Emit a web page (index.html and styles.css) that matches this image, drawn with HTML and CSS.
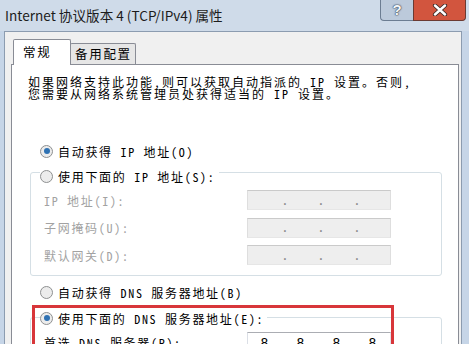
FILE: index.html
```html
<!DOCTYPE html>
<html lang="zh-CN">
<head>
    <meta charset="UTF-8">
    <meta name="viewport" content="width=device-width, initial-scale=1.0">
    <title>Internet 协议版本 4 (TCP/IPv4) 属性</title>
    <link rel="stylesheet" href="styles.css">
</head>
<body>
    <div class="window">
        <div class="titlebar">
            <span class="title">Internet 协议版本 4 (TCP/IPv4) 属性</span>
            <div class="caption-btns">
                <div class="btn-help">?</div>
                <div class="btn-close">
                    <svg width="16" height="12" viewBox="0 0 16 12">
                        <path d="M3 1.5 L13 10.5 M13 1.5 L3 10.5" stroke="#3b2a28" stroke-width="4.2" stroke-linecap="round"/>
                        <path d="M3 1.5 L13 10.5 M13 1.5 L3 10.5" stroke="#fff" stroke-width="2.4" stroke-linecap="round"/>
                    </svg>
                </div>
            </div>
        </div>
        <div class="client">
            <div class="tabs">
                <div class="tab active">常规</div>
                <div class="tab">备用配置</div>
            </div>
            <div class="panel">
                <p class="intro">如果网络支持此功能，则可以获取自动指派的 IP 设置。否则，<br>您需要从网络系统管理员处获得适当的 IP 设置。</p>

                <div class="radio-row">
                    <span class="radio checked"></span>
                    <span>自动获得 IP 地址(O)</span>
                </div>

                <div class="group">
                    <div class="radio-row group-title">
                        <span class="radio"></span>
                        <span>使用下面的 IP 地址(S):</span>
                    </div>
                    <div class="field disabled">
                        <span class="field-label">IP 地址(I):</span>
                        <div class="ip-box">
                            <span class="oct"></span><span class="dot">.</span><span class="oct"></span><span class="dot">.</span><span class="oct"></span><span class="dot">.</span><span class="oct"></span>
                        </div>
                    </div>
                    <div class="field disabled">
                        <span class="field-label">子网掩码(U):</span>
                        <div class="ip-box">
                            <span class="oct"></span><span class="dot">.</span><span class="oct"></span><span class="dot">.</span><span class="oct"></span><span class="dot">.</span><span class="oct"></span>
                        </div>
                    </div>
                    <div class="field disabled">
                        <span class="field-label">默认网关(D):</span>
                        <div class="ip-box">
                            <span class="oct"></span><span class="dot">.</span><span class="oct"></span><span class="dot">.</span><span class="oct"></span><span class="dot">.</span><span class="oct"></span>
                        </div>
                    </div>
                </div>

                <div class="radio-row dns-auto">
                    <span class="radio"></span>
                    <span>自动获得 DNS 服务器地址(B)</span>
                </div>

                <div class="group dns-group">
                    <div class="highlight"></div>
                    <div class="radio-row group-title">
                        <span class="radio checked"></span>
                        <span>使用下面的 DNS 服务器地址(E):</span>
                    </div>
                    <div class="field">
                        <span class="field-label">首选 DNS 服务器(P):</span>
                        <div class="ip-box">
                            <span class="oct">8</span><span class="dot">.</span><span class="oct">8</span><span class="dot">.</span><span class="oct">8</span><span class="dot">.</span><span class="oct">8</span>
                        </div>
                    </div>
                </div>
            </div>
        </div>
    </div>
</body>
</html>
```

FILE: styles.css
```css
html,
body {
    margin: 0;
    padding: 0;
    background-color: #c9d8e9;
}
body {
    font-family: "Noto Sans CJK SC", "Liberation Sans", sans-serif;
    font-size: 12px;
    letter-spacing: 1.7px;
    color: #000;
}
.window {
    width: 469px;
    height: 344px;
    box-sizing: border-box;
    overflow: hidden;
    padding: 0 7px 0 4px;
    background-color: #c6d5e7;
}
.titlebar {
    height: 31px;
    margin: 0 -7px 0 -4px;
    padding: 0 3px 0 5px;
    display: flex;
    justify-content: space-between;
    align-items: flex-start;
    background-color: #cfdbe9;
}
.title {
    margin-top: 6px;
    font-size: 13.6px;
    line-height: 18px;
    letter-spacing: 0;
    color: #1c1c1c;
}
.caption-btns {
    display: flex;
}
.btn-help {
    width: 33px;
    height: 21px;
    box-sizing: border-box;
    border: 1px solid #6c7d92;
    border-top: none;
    border-right: none;
    border-radius: 0 0 0 4px;
    background-color: #bccadb;
    color: #f2f6fa;
    font-family: "Liberation Sans", sans-serif;
    font-weight: bold;
    font-size: 15px;
    letter-spacing: 0;
    line-height: 20px;
    text-align: center;
    text-shadow: 0 0 1px #3e4a5a, 0 0 1px #3e4a5a, 0 0 2px #3e4a5a;
}
.btn-close {
    width: 53px;
    height: 21px;
    box-sizing: border-box;
    border: 1px solid #6b3a32;
    border-top: none;
    border-radius: 0 0 4px 0;
    background-color: #d2553e;
    display: flex;
    align-items: center;
    justify-content: center;
}
.client {
    height: 313px;
    box-sizing: border-box;
    border: 1px solid #8c9cb0;
    border-bottom: none;
    background-color: #f0f0f0;
    padding: 7px 2px 0 6px;
}
.tabs {
    display: flex;
    align-items: flex-end;
    margin-bottom: -1px;
    padding-left: 2px;
}
.tab {
    box-sizing: border-box;
    height: 21px;
    border: 1px solid #898c95;
    border-bottom: none;
    border-radius: 2px 2px 0 0;
    background-color: #e6e6e6;
    font-size: 12.5px;
    line-height: 19px;
    padding: 0 4px;
    width: 66px;
    margin-bottom: 1px;
    white-space: nowrap;
}
.tab.active {
    position: relative;
    z-index: 1;
    height: 26px;
    width: 58px;
    margin-bottom: 0;
    margin-right: -1px;
    background-color: #fff;
    padding: 0 9px;
    line-height: 24px;
}
.panel {
    box-sizing: border-box;
    height: 300px;
    border: 1px solid #898c95;
    border-bottom: none;
    background-color: #fff;
    padding: 11px 0 0 16px;
}
.intro {
    margin: 0;
    line-height: 12px;
    letter-spacing: 2px;
    font-feature-settings: "hwid";
    white-space: nowrap;
}
.radio-row {
    display: flex;
    align-items: center;
    height: 16px;
    gap: 5px;
    font-feature-settings: "hwid";
}
.panel > .radio-row {
    margin: 43px 0 0 12px;
}
.panel > .radio-row.dns-auto {
    margin-top: 8px;
}
.radio {
    width: 13px;
    height: 13px;
    box-sizing: border-box;
    border-radius: 50%;
    border: 1px solid #8e9091;
    background-color: #ececec;
    display: flex;
    align-items: center;
    justify-content: center;
}
.radio.checked::after {
    content: "";
    width: 6px;
    height: 6px;
    border-radius: 50%;
    background-color: #2f72b3;
}
.group {
    width: 412px;
    box-sizing: border-box;
    margin: 13px 0 0 2px;
    border: 1px solid #d5dfe5;
    border-radius: 3px;
    padding: 0 0 10px 9px;
}
.group-title {
    margin-top: -5px;
    width: max-content;
    padding-right: 3px;
    background-color: #fff;
}
.field {
    display: flex;
    align-items: center;
    height: 20px;
    margin-top: 7.5px;
    font-feature-settings: "hwid";
}
.group-title + .field {
    margin-top: 6px;
}
.field-label {
    width: 203px;
    padding-left: 4px;
    white-space: nowrap;
}
.field.disabled .field-label {
    color: #a2a2a2;
}
.ip-box {
    box-sizing: border-box;
    width: 144px;
    height: 20px;
    border: 1px solid #abadb3;
    border-color: #abadb3 #e2e3ea #e3e9ef #dbdfe6;
    background-color: #fff;
    display: flex;
    align-items: center;
    font-family: "DejaVu Sans Mono", monospace;
    font-size: 13px;
    letter-spacing: 0;
}
.field.disabled .ip-box {
    background-color: #eeeeee;
    border-color: #cacaca #dedede #e6e6e6 #dedede;
    color: #8f8f8f;
}
.oct {
    width: 33px;
    text-align: center;
}
.dot {
    width: 3px;
    text-align: center;
}
.dns-group {
    position: relative;
    margin-top: 17px;
    height: 60px;
}
.dns-group .group-title {
    margin-top: -8px;
}
.highlight {
    position: absolute;
    top: -13px;
    left: 1px;
    width: 362px;
    height: 70px;
    box-sizing: border-box;
    border: 3px solid #d8363a;
    z-index: 2;
}
```
